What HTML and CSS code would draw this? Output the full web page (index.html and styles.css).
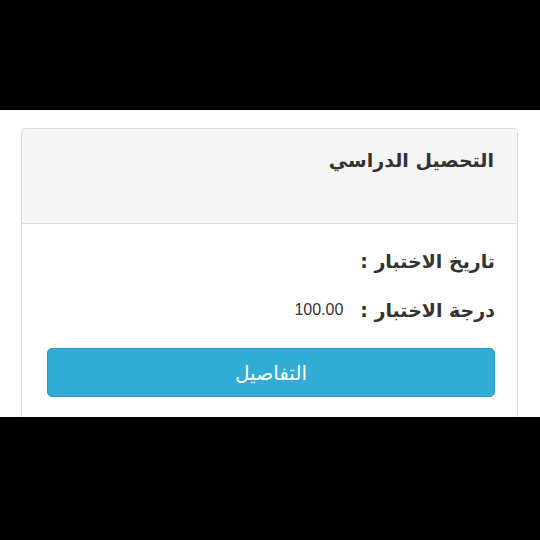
FILE: index.html
```html
<!DOCTYPE html>
<html lang="ar" dir="rtl">
<head>
    <meta charset="UTF-8">
    <meta name="viewport" content="width=device-width, initial-scale=1.0">
    <title>التحصيل الدراسي</title>
    <link rel="stylesheet" href="styles.css">
</head>
<body>

<div class="band band-top"></div>

<div class="screen">
    <div class="panel">
        <div class="panelHeading">
            <h3 class="panelTitle">التحصيل الدراسي</h3>
        </div>
        <div class="panelBody">
            <div class="row"><span class="label">تاريخ الاختبار :</span></div>
            <div class="row"><span class="label">درجة الاختبار :</span><span class="value">100.00</span></div>
            <button class="detailsBtn">التفاصيل</button>
        </div>
    </div>
</div>

<div class="band band-bottom"></div>

</body>
</html>
```

FILE: styles.css
```css
body {
    margin: 0;
    background: #000;
    font-family: "DejaVu Sans", "Noto Sans", sans-serif;
    color: #333;
    height: 540px;
    display: flex;
    flex-direction: column;
}
.band-top {
    height: 110px;
}
.screen {
    background: #fff;
    height: 307px;
    overflow: hidden;
    padding: 18px 22px 0 21px;
    box-sizing: border-box;
}
.panel {
    border: 1px solid #ddd;
    border-radius: 4px;
    height: 400px;
}
.panelHeading {
    background: #f5f5f5;
    border-bottom: 1px solid #ddd;
    border-radius: 4px 4px 0 0;
    height: 95px;
    padding: 17px 23px 0 23px;
    box-sizing: border-box;
}
.panelTitle {
    margin: 0;
    font-size: 19px;
    font-weight: bold;
    line-height: 28px;
}
.panelBody {
    padding: 22px 22px 0 25px;
}
.row {
    display: flex;
    align-items: center;
    height: 30px;
    margin-bottom: 19px;
}
.label {
    font-size: 19px;
    font-weight: bold;
}
.value {
    font-family: "Liberation Sans", Arial, sans-serif;
    font-size: 16px;
    margin-right: 17px;
    color: #333;
}
.detailsBtn {
    display: block;
    width: 100%;
    height: 49px;
    margin-top: 23px;
    background: #31acd6;
    border: 1px solid #2a9ac1;
    border-radius: 5px;
    color: #fff;
    font-family: "DejaVu Sans", sans-serif;
    font-size: 20px;
    cursor: pointer;
}
.band-bottom {
    flex: 1;
}
```
